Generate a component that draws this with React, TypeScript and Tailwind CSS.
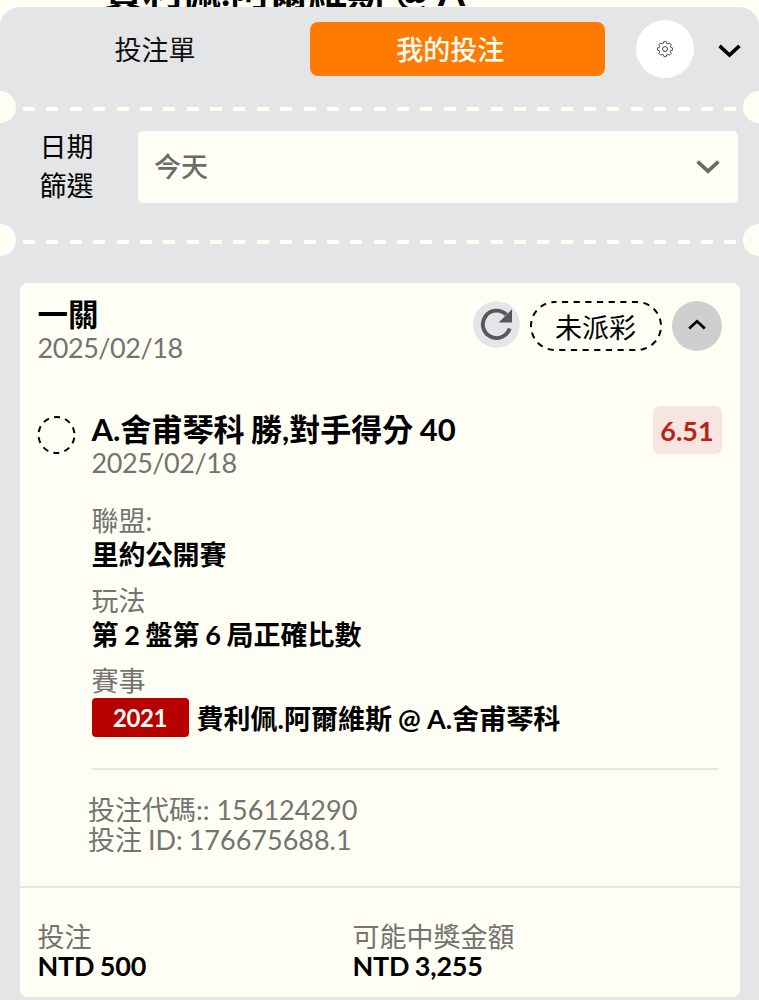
import React from "react";

function Perforation() {
  return (
    <div className="flex h-8 shrink-0 items-center">
      <div className="h-8 w-4 rounded-r-full bg-[#fffef5]" />
      <div className="ml-[7px] mt-[3px] h-1 w-[714px] bg-[repeating-linear-gradient(90deg,#fffef5_0,#fffef5_12px,transparent_12px,transparent_23.38px)]" />
      <div className="ml-auto h-8 w-4 rounded-l-full bg-[#fffef5]" />
    </div>
  );
}

function Chevron({ className }: { className: string }) {
  return (
    <svg className={className} viewBox="0 0 24 14" fill="none" stroke="currentColor" strokeWidth="3.7">
      <path d="M1.6 1.6 12 11.2 22.4 1.6" />
    </svg>
  );
}

function Gear() {
  return (
    <svg className="size-4" viewBox="0 0 16 16" fill="none" stroke="#333" strokeWidth="0.9" strokeLinejoin="round">
      <path d="M6.7 .7h2.6l.5 1.8 1 .4 1.7-.9 1.8 1.8-.9 1.6.4 1 1.6.5v2.3l-1.7.5-.4 1.1.9 1.6-1.8 1.8-1.6-.9-1.1.4-.4 1.7H6.8l-.5-1.7-1.1-.4-1.6.9-1.8-1.8.9-1.6-.4-1.1L.6 9.2V6.9l1.7-.5.4-1-.9-1.6L3.6 2l1.6.9 1-.4z" />
      <circle cx="8" cy="8" r="2.5" />
    </svg>
  );
}

function Detail({ label, value }: { label: string; value: string }) {
  return (
    <div className="mb-[14px]">
      <div className="h-[34px] leading-[33px] text-[#73736f]">{label}</div>
      <div className="h-[32px] font-bold leading-[33px] [word-spacing:-0.9px]">{value}</div>
    </div>
  );
}

export default function App() {
  return (
    <div className="flex h-[1000px] w-[759px] flex-col overflow-hidden whitespace-nowrap bg-[#fffef5] font-[Lato,'Noto_Sans_CJK_TC',sans-serif] text-[27px] text-black">
      <div className="h-[7px] shrink-0 overflow-hidden">
        <div className="-mt-[31px] pl-[104px] text-[39px] font-bold leading-[44px]">費利佩.阿爾維斯 @ A</div>
      </div>
      <div className="flex flex-1 flex-col rounded-t-[20px] bg-[#e4e5e7]">
        <div className="flex h-[84px] shrink-0 items-center">
          <div className="w-[310px] pt-[2px] text-center leading-[40px] text-[#111]">投注單</div>
          <div className="flex h-[54px] w-[294.5px] items-center justify-center rounded-[8px] bg-[#ff7a00] pr-[14px] pt-[2px] font-medium text-[#fffef5]">我的投注</div>
          <div className="ml-[31.5px] flex size-[58px] items-center justify-center rounded-full bg-white"><Gear /></div>
          <Chevron className="ml-[23.5px] mt-[3px] h-[14px] w-[23px]" />
        </div>
        <Perforation />
        <div className="flex h-[101px] shrink-0 pt-2">
          <div className="-mt-[4px] ml-[39.5px] w-[98.5px] leading-[39px]">日期<br />篩選</div>
          <div className="flex h-[72px] w-[600px] items-center justify-between rounded-[5px] bg-[#fffef5] pl-4 pr-[18px] font-medium text-[#6b6b67]">
            <span>今天</span>
            <Chevron className="h-[14px] w-[24px]" />
          </div>
        </div>
        <Perforation />
        <div className="ml-[19.5px] mt-[27px] flex h-[714px] w-[720px] shrink-0 flex-col rounded-[7px] bg-[#fffef5]">
          <div className="flex h-[122px] px-[18px] pt-[17px]">
            <div className="flex-1">
              <div className="-mt-[2px] h-[34px] text-[30.5px] font-bold leading-8">一關</div>
              <div className="h-8 leading-8 tracking-[-0.45px] text-[#73736f]">2025/02/18</div>
            </div>
            <svg className="mt-px size-[47px]" viewBox="0 0 47 47">
              <circle cx="23.5" cy="23.5" r="23.3" fill="#e4e5e7" />
              <path d="M33.3 13.7A13.7 13.7 0 1 0 36.6 27.5" fill="none" stroke="#56585c" strokeWidth="3.9" />
              <path d="M39 8.3V21.6H25.7z" fill="#56585c" />
            </svg>
            <div className="relative ml-[9px] flex h-[52px] w-[134px] items-center justify-center pt-[3px]">
              <svg className="absolute inset-0 size-full" viewBox="0 0 134 52" fill="none">
                <rect x="2" y="2" width="130" height="48" rx="24" stroke="#000" strokeWidth="2" strokeDasharray="6.2 5.46" strokeDashoffset="4.7" />
              </svg>
              <span className="leading-[40px]">未派彩</span>
            </div>
            <div className="ml-[9px] mt-px flex size-[50px] items-center justify-center rounded-full bg-[#cfcfcf]">
              <Chevron className="mb-1 h-[11px] w-[18px] rotate-180" />
            </div>
          </div>
          <div className="flex h-[102px] px-[18px]">
            <svg className="mt-[11px] h-10 w-[38px] shrink-0 overflow-visible" viewBox="0 0 38 40" fill="none">
              <circle cx="18.5" cy="19" r="18" stroke="#000" strokeWidth="2" strokeDasharray="6 5.31" transform="rotate(8.5 18.5 19)" />
            </svg>
            <div className="ml-4 flex-1">
              <div className="mt-[8px] h-[33px] text-[31px] font-bold leading-8 [word-spacing:-1px]">A.舍甫琴科 勝,對手得分 40</div>
              <div className="mt-px h-8 leading-8 tracking-[-0.45px] text-[#73736f]">2025/02/18</div>
            </div>
            <div className="mt-px flex h-12 w-[69px] items-center justify-center rounded-[7px] bg-[#f8e5df] pt-[2px] font-bold text-[#b7231c]">6.51</div>
          </div>
          <div className="-mt-[3px] ml-[72px] mr-[21px] flex h-[266px] flex-col border-b-2 border-[#e6e5df]">
            <Detail label="聯盟:" value="里約公開賽" />
            <Detail label="玩法" value="第 2 盤第 6 局正確比數" />
            <div className="h-[34px] leading-[33px] text-[#73736f]">賽事</div>
            <div className="flex h-[39px] items-center font-bold">
              <div className="mr-2 flex h-[39px] w-[97px] items-center justify-center rounded-[4px] bg-[#b70000] pt-px text-[24px] tracking-[-0.4px] text-[#fffef5]">2021</div>
              <span className="pt-1 [word-spacing:-0.4px]">費利佩.阿爾維斯 @ A.舍甫琴科</span>
            </div>
          </div>
          <div className="h-[118px] border-b-2 border-[#e6e5df] pl-[68.5px] pt-[25px] leading-[30px] text-[#73736f]">
            <div>投注代碼:: 156124290</div>
            <div className="[word-spacing:-1px]">投注 ID: 176675688.1</div>
          </div>
          <div className="flex pl-[18px] pt-[34px]">
            <div className="w-[315px]">
              <div className="h-[29px] leading-[29px] text-[#73736f]">投注</div>
              <div className="h-[29px] font-bold leading-[29px] tracking-[-0.2px] [word-spacing:-1px]">NTD 500</div>
            </div>
            <div>
              <div className="h-[29px] leading-[29px] text-[#73736f]">可能中獎金額</div>
              <div className="h-[29px] font-bold leading-[29px] tracking-[-0.2px] [word-spacing:-1px]">NTD 3,255</div>
            </div>
          </div>
        </div>
      </div>
    </div>
  );
}
